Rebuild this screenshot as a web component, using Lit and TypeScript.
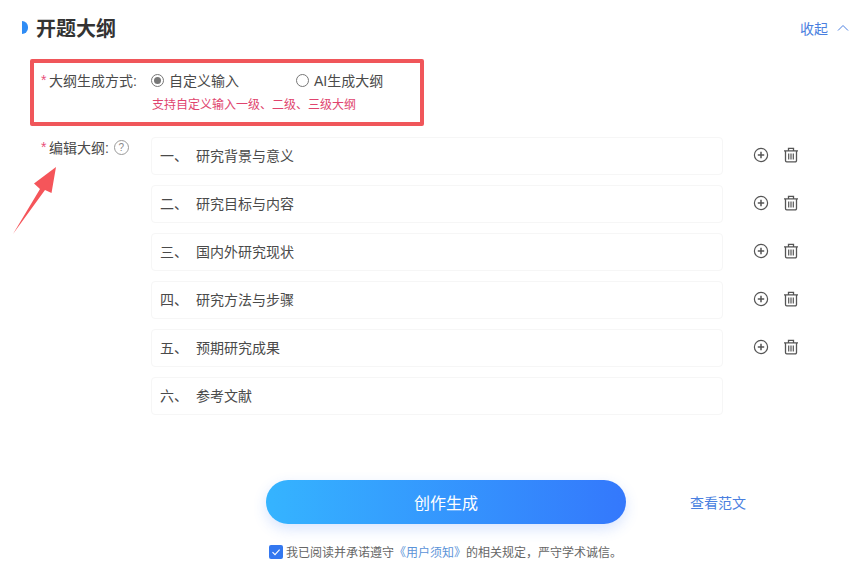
import { LitElement, html, css, svg } from 'lit';
import { customElement, state } from 'lit/decorators.js';

const plusIcon = svg`<circle cx="8" cy="8" r="6.6" fill="none" stroke="#555" stroke-width="1.2"/><path d="M4.8 8h6.4M8 4.8v6.4" stroke="#555" stroke-width="1.5" fill="none"/>`;
const trashIcon = svg`<path d="M1 3.800h14M5.500 3.400V1.400h5v2M2.500 4v9.600a1.200 1.200 0 0 0 1.200 1.200h8.600a1.200 1.200 0 0 0 1.200-1.200V4" stroke="#555" stroke-width="1.300" fill="none"/><path d="M5.700 6.400v6M8 6.400v6M10.300 6.400v6" stroke="#555" stroke-width="1.200" fill="none"/>`;

@customElement('app-root')
export class AppRoot extends LitElement {
  @state() items = [
    ['一、', '研究背景与意义'],
    ['二、', '研究目标与内容'],
    ['三、', '国内外研究现状'],
    ['四、', '研究方法与步骤'],
    ['五、', '预期研究成果'],
    ['六、', '参考文献'],
  ];

  static styles = css`
    :host {
      display: block;
      position: relative;
      width: 863px;
      height: 578px;
      background: #fff;
      overflow: hidden;
      font-family: "Liberation Sans", "Noto Sans CJK SC", sans-serif;
      font-size: 14px;
      color: #555;
    }

    .page {
      display: flex;
      flex-direction: column;
      padding: 15px 0 0 22px;
    }

    .head {
      display: flex;
      align-items: center;
      height: 25px;
      width: 827px;
    }

    .mark {
      width: 6px;
      height: 13px;
      background: #2f8cf5;
      border-radius: 0 7px 7px 0;
      margin-right: 9px;
    }

    .title {
      font-size: 20px;
      font-weight: 700;
      color: #333;
      flex: 1;
      margin-left: -1px;
    }

    .collapse {
      display: flex;
      align-items: center;
      gap: 9px;
      color: #4a7fe0;
      font-size: 14px;
    }

    .form-row {
      display: flex;
      margin-top: 30px;
    }

    .label {
      box-sizing: border-box;
      width: 129px;
      padding-left: 19px;
      flex: none;
      display: flex;
      align-items: center;
      height: 20px;
      color: #4a4a4a;
      white-space: nowrap;
    }

    .star {
      color: #e8507a;
      width: 8px;
      flex: none;
    }

    .mode {
      display: flex;
      flex-direction: column;
      gap: 7px;
    }

    .radios {
      display: flex;
      height: 20px;
      align-items: center;
    }

    .radio {
      display: flex;
      align-items: center;
      gap: 5px;
      width: 145px;
      color: #4a4a4a;
    }

    .dot {
      width: 11px;
      height: 11px;
      border: 1px solid #777;
      border-radius: 50%;
      display: flex;
      align-items: center;
      justify-content: center;
    }

    .dot.on::after {
      content: '';
      width: 7px;
      height: 7px;
      border-radius: 50%;
      background: #777;
    }

    .hint {
      font-size: 12px;
      color: #e0446e;
      height: 16px;
      line-height: 16px;
      padding-left: 1px;
    }

    .outline-row {
      display: flex;
      margin-top: 24px;
    }

    .help {
      width: 13px;
      height: 13px;
      border: 1px solid #999;
      border-radius: 50%;
      margin-left: 5px;
      font-size: 10px;
      line-height: 13px;
      text-align: center;
      color: #888;
    }

    .list {
      display: flex;
      flex-direction: column;
      gap: 10px;
    }

    .item {
      display: flex;
      align-items: center;
    }

    .field {
      box-sizing: border-box;
      width: 572px;
      height: 38px;
      border: 1px solid #f6f6f6;
      border-radius: 4px;
      display: flex;
      align-items: center;
      padding: 0 0 2px 8px;
      color: #4a4a4a;
    }

    .num {
      width: 36px;
    }

    .tools {
      display: flex;
      align-items: center;
      gap: 14px;
      margin: -2px 0 0 30px;
    }

    .tools svg {
      display: block;
      width: 16px;
      height: 16px;
    }

    .actions {
      display: flex;
      align-items: center;
      margin: 65px 0 0 244px;
    }

    .create {
      width: 360px;
      height: 44px;
      border-radius: 22px;
      background: linear-gradient(90deg, #35b4ff, #3478fc);
      color: #fff;
      font-size: 16px;
      display: flex;
      align-items: center;
      justify-content: center;
      box-shadow: 0 5px 14px rgba(60, 120, 250, 0.2);
    }

    .sample {
      margin-left: 64px;
      color: #4a7fe0;
    }

    .agree {
      display: flex;
      align-items: center;
      gap: 3px;
      margin: 19px 0 0 247px;
      font-size: 12px;
      color: #666;
    }

    .check {
      width: 14px;
      height: 14px;
      background: #3478f0;
      border-radius: 2px;
      display: block;
    }

    .link {
      color: #5b93d8;
    }

    .callout {
      position: absolute;
      left: 30px;
      top: 59px;
      width: 394px;
      height: 67px;
      box-sizing: border-box;
      border: 4px solid #f0565a;
      border-radius: 2px;
    }

    .arrow {
      position: absolute;
      left: 12px;
      top: 165px;
      width: 46px;
      height: 72px;
    }
  `;

  render() {
    return html`
      <div class="page">
        <div class="head">
          <span class="mark"></span>
          <span class="title">开题大纲</span>
          <span class="collapse">收起
            <svg width="12" height="7" viewBox="0 0 12 7"><path d="M1 6.500l5-5 5 5" fill="none" stroke="#4a7fe0" stroke-width="1"/></svg>
          </span>
        </div>

        <div class="form-row">
          <div class="label"><span class="star">*</span>大纲生成方式:</div>
          <div class="mode">
            <div class="radios">
              <span class="radio"><span class="dot on"></span>自定义输入</span>
              <span class="radio"><span class="dot"></span>AI生成大纲</span>
            </div>
            <div class="hint">支持自定义输入一级、二级、三级大纲</div>
          </div>
        </div>

        <div class="outline-row">
          <div class="label"><span class="star">*</span>编辑大纲:<span class="help">?</span></div>
          <div class="list">
            ${this.items.map(([n, t], i) => html`
              <div class="item">
                <div class="field"><span class="num">${n}</span>${t}</div>
                ${i < 5 ? html`
                  <div class="tools">
                    <svg viewBox="0 0 16 16">${plusIcon}</svg>
                    <svg viewBox="0 0 16 16">${trashIcon}</svg>
                  </div>` : ''}
              </div>`)}
          </div>
        </div>

        <div class="actions">
          <div class="create">创作生成</div>
          <span class="sample">查看范文</span>
        </div>

        <div class="agree">
          <svg class="check" viewBox="0 0 14 14"><path d="M3.500 7.200l2.500 2.500 4.600-5" fill="none" stroke="#fff" stroke-width="1.100"/></svg>
          <span>我已阅读并承诺遵守<span class="link">《用户须知》</span>的相关规定，严守学术诚信。</span>
        </div>
      </div>

      <div class="callout"></div>
      <svg class="arrow" viewBox="0 0 46 72">
        <path d="M1 69L28 24 22 18.500 44 2 39.500 28 33 25z" fill="#f5555a"/>
      </svg>
    `;
  }
}
